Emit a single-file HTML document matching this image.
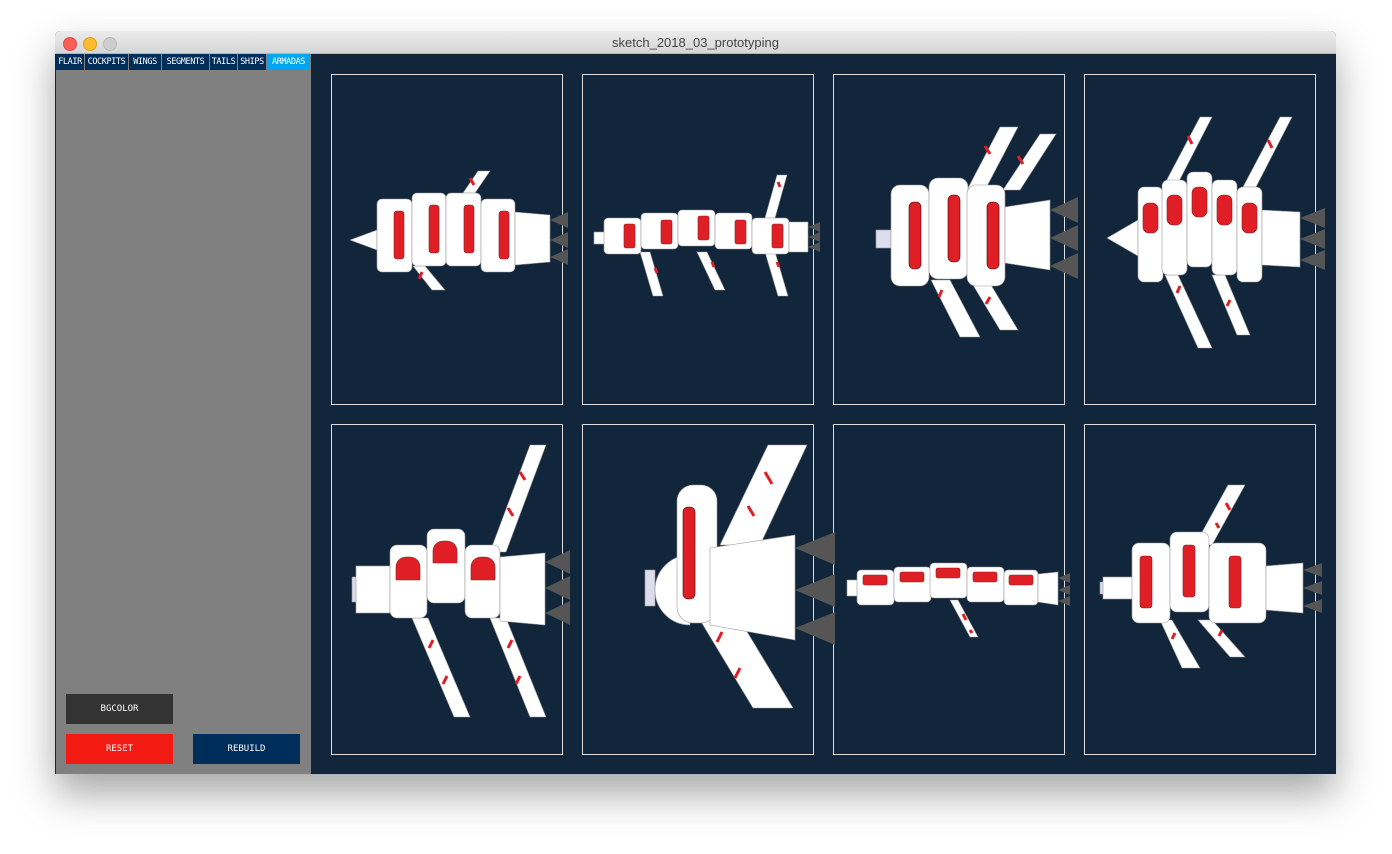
<!DOCTYPE html>
<html><head><meta charset="utf-8"><style>
html,body{margin:0;padding:0;width:1392px;height:854px;background:#fff;overflow:hidden;font-family:"Liberation Sans",sans-serif}
.win{position:absolute;left:55px;top:31px;width:1281px;height:743px;box-shadow:0 20px 40px rgba(0,0,0,.35);border-radius:5px 5px 0 0;overflow:hidden;background:#11253b}
.title{position:absolute;left:0;top:0;width:1281px;height:22px;background:linear-gradient(#ebebeb,#d6d6d6);border-bottom:1px solid #b5b5b5;text-align:center;font-size:13px;line-height:23px;color:#444}
.dot{position:absolute;top:6px;width:12px;height:12px;border-radius:50%}
.left{position:absolute;left:1px;top:23px;width:255px;height:720px;background:#808080}
.tab{position:absolute;top:23px;height:16px;background:#002e5a;color:#fff;font-size:8.5px;line-height:17px;text-align:center;font-family:"DejaVu Sans Mono",monospace;letter-spacing:-.4px}
.btn{position:absolute;width:107px;height:30px;color:#fff;font-size:9px;line-height:30px;text-align:center;font-family:"DejaVu Sans Mono",monospace}
svg{position:absolute;left:0;top:0}
</style></head><body>
<div class="win">
<div class="title">sketch_2018_03_prototyping
<div class="dot" style="left:8px;background:#fc5f57;border:0.5px solid #de4a43"></div>
<div class="dot" style="left:28px;background:#fdbc2e;border:0.5px solid #de9f22"></div>
<div class="dot" style="left:48px;background:#cdcdcd;border:0.5px solid #b9b9b9"></div>
</div>
<div class="left"></div>
<div class="tab" style="left:1px;width:28px">FLAIR</div>
<div class="tab" style="left:30px;width:43px">COCKPITS</div>
<div class="tab" style="left:74px;width:32px">WINGS</div>
<div class="tab" style="left:107px;width:47px">SEGMENTS</div>
<div class="tab" style="left:155px;width:27px">TAILS</div>
<div class="tab" style="left:183px;width:28px">SHIPS</div>
<div class="tab" style="left:212px;width:43px;background:#00a6f2">ARMADAS</div>
<div class="btn" style="left:11px;top:663px;background:#333">BGCOLOR</div>
<div class="btn" style="left:11px;top:703px;background:#f21a12">RESET</div>
<div class="btn" style="left:138px;top:703px;background:#002e5a">REBUILD</div>
</div>
<svg width="1392" height="854" viewBox="0 0 1392 854">
<defs><clipPath id="cp"><rect x="311" y="54" width="1025" height="720"/></clipPath></defs>
<g fill="none" stroke="#ddd" stroke-width="1">
<rect x="331.5" y="74.5" width="231" height="330"/><rect x="582.5" y="74.5" width="231" height="330"/><rect x="833.5" y="74.5" width="231" height="330"/><rect x="1084.5" y="74.5" width="231" height="330"/>
<rect x="331.5" y="424.5" width="231" height="330"/><rect x="582.5" y="424.5" width="231" height="330"/><rect x="833.5" y="424.5" width="231" height="330"/><rect x="1084.5" y="424.5" width="231" height="330"/>
</g>
<g clip-path="url(#cp)" stroke="#999" stroke-width=".6">
<!-- ship1 -->
<g fill="#fff"><polygon points="463,193 478,171 490,171 475,193"/><polygon points="413,266 425,266 445,290 432,290"/>
<polygon points="350,240 377,230 377,250"/>
<rect x="377" y="199" width="35" height="73" rx="5"/><rect x="412" y="193" width="34" height="73" rx="5"/><rect x="446" y="193" width="35" height="73" rx="5"/><rect x="481" y="199" width="34" height="73" rx="5"/>
<polygon points="515,212 550,215 550,262 515,265"/></g>
<g fill="#555" stroke="none"><polygon points="550,220 568,212 568,228"/><polygon points="550,240 568,232 568,248"/><polygon points="550,257 568,249 568,265"/></g>
<g fill="#e01e26" stroke="#822"><rect x="394" y="211" width="10" height="48" rx="3"/><rect x="429" y="205" width="10" height="48" rx="3"/><rect x="464" y="205" width="10" height="48" rx="3"/><rect x="499" y="211" width="10" height="48" rx="3"/></g>
<!-- ship2 -->
<g fill="#fff"><polygon points="765,218 777,175 787,175 775,218"/><polygon points="640,252 650,252 663,296 653,296"/><polygon points="697,252 707,252 725,290 715,290"/><polygon points="765,252 775,252 788,296 778,296"/>
<rect x="594" y="232" width="12" height="12"/>
<rect x="604" y="218" width="37" height="36" rx="4"/><rect x="641" y="213" width="37" height="36" rx="4"/><rect x="678" y="210" width="37" height="36" rx="4"/><rect x="715" y="213" width="37" height="36" rx="4"/><rect x="752" y="218" width="37" height="36" rx="4"/>
<polygon points="789,222 808,222 808,252 789,252"/></g>
<g fill="#555" stroke="none"><polygon points="808,227 820,222 820,232"/><polygon points="808,237 820,232 820,242"/><polygon points="808,247 820,242 820,252"/></g>
<g fill="#e01e26" stroke="#822"><rect x="624" y="224" width="11" height="24" rx="2"/><rect x="661" y="220" width="11" height="24" rx="2"/><rect x="698" y="216" width="11" height="24" rx="2"/><rect x="735" y="220" width="11" height="24" rx="2"/><rect x="772" y="224" width="11" height="24" rx="2"/></g>
<!-- ship3 -->
<g fill="#fff"><polygon points="967,190 1000,127 1018,127 985,190"/><polygon points="1003,190 1040,134 1056,134 1020,190"/><polygon points="931,280 950,280 980,337 960,337"/><polygon points="970,280 988,280 1018,330 1000,330"/>
<rect x="876" y="230" width="15" height="18" fill="#dde"/>
<rect x="891" y="185" width="38" height="101" rx="9"/><rect x="929" y="178" width="39" height="101" rx="9"/><rect x="967" y="185" width="38" height="101" rx="9"/>
<polygon points="1005,207 1050,200 1050,270 1005,263"/></g>
<g fill="#555" stroke="none"><polygon points="1050,210 1078,197 1078,223"/><polygon points="1050,238 1078,225 1078,251"/><polygon points="1050,266 1078,253 1078,279"/></g>
<g fill="#e01e26" stroke="#400"><rect x="909" y="202" width="12" height="67" rx="5"/><rect x="948" y="195" width="12" height="67" rx="5"/><rect x="987" y="202" width="12" height="67" rx="5"/></g>
<!-- ship4 -->
<g fill="#fff"><polygon points="1163,187 1200,117 1212,117 1176,187"/><polygon points="1243,187 1280,117 1292,117 1256,187"/><polygon points="1165,275 1178,275 1212,348 1198,348"/><polygon points="1212,275 1225,275 1250,335 1237,335"/>
<polygon points="1107,238 1138,220 1138,256" fill="#fff"/>
<rect x="1138" y="187" width="25" height="95" rx="6"/><rect x="1162" y="180" width="25" height="95" rx="6"/><rect x="1187" y="172" width="25" height="95" rx="6"/><rect x="1212" y="180" width="25" height="95" rx="6"/><rect x="1237" y="187" width="25" height="95" rx="6"/>
<polygon points="1262,210 1300,212 1300,267 1262,265"/></g>
<g fill="#555" stroke="none"><polygon points="1300,218 1325,208 1325,228"/><polygon points="1300,239 1325,229 1325,249"/><polygon points="1300,260 1325,250 1325,270"/></g>
<g fill="#e01e26" stroke="#822"><rect x="1143" y="203" width="15" height="30" rx="6"/><rect x="1167" y="195" width="15" height="30" rx="6"/><rect x="1192" y="187" width="15" height="30" rx="6"/><rect x="1217" y="195" width="15" height="30" rx="6"/><rect x="1242" y="203" width="15" height="30" rx="6"/></g>
<!-- ship5 -->
<g fill="#fff"><polygon points="490,552 530,445 546,445 506,552"/><polygon points="412,618 428,618 470,717 454,717"/><polygon points="490,618 506,618 546,717 530,717"/>
<rect x="352" y="577" width="6" height="25" fill="#dde"/>
<rect x="356" y="566" width="34" height="47"/>
<rect x="390" y="545" width="37" height="73" rx="7"/><rect x="427" y="529" width="38" height="74" rx="7"/><rect x="465" y="545" width="35" height="73" rx="7"/>
<polygon points="500,557 545,553 545,625 500,621"/></g>
<g fill="#555" stroke="none"><polygon points="545,562 570,550 570,574"/><polygon points="545,588 570,576 570,600"/><polygon points="545,613 570,601 570,625"/></g>
<g fill="#e01e26" stroke="#822"><path d="M396 580v-13a10 10 0 0 1 10-10h4a10 10 0 0 1 10 10v13z"/><path d="M433 563v-12a10 10 0 0 1 10-10h4a10 10 0 0 1 10 10v12z"/><path d="M471 580v-13a10 10 0 0 1 10-10h4a10 10 0 0 1 10 10v13z"/></g>
<!-- ship6 -->
<g fill="#fff"><polygon points="720,545 768,445 807,445 760,545"/><polygon points="700,620 740,620 793,708 753,708"/>
<rect x="645" y="570" width="10" height="36" fill="#dde"/>
<path d="M690 555 v70 a35 35 0 0 1 0 -70z"/>
<rect x="677" y="485" width="40" height="138" rx="16"/>
<polygon points="710,548 795,535 795,640 710,625"/></g>
<g fill="#555" stroke="none"><polygon points="795,548 835,532 835,565"/><polygon points="795,590 835,574 835,607"/><polygon points="795,628 835,612 835,645"/></g>
<g fill="#e01e26" stroke="#400"><rect x="683" y="507" width="12" height="92" rx="5"/></g>
<!-- ship7 -->
<g fill="#fff"><polygon points="950,600 958,600 978,637 970,637"/>
<rect x="847" y="580" width="12" height="16"/>
<rect x="857" y="570" width="37" height="35" rx="4"/><rect x="894" y="567" width="37" height="35" rx="4"/><rect x="930" y="563" width="37" height="35" rx="4"/><rect x="967" y="567" width="37" height="35" rx="4"/><rect x="1004" y="570" width="34" height="35" rx="4"/>
<polygon points="1038,574 1058,572 1058,605 1038,602"/></g>
<g fill="#555" stroke="none"><polygon points="1058,578 1070,573 1070,583"/><polygon points="1058,590 1070,585 1070,595"/><polygon points="1058,601 1070,596 1070,606"/></g>
<g fill="#e01e26" stroke="#822"><rect x="863" y="575" width="24" height="10" rx="2"/><rect x="900" y="572" width="24" height="10" rx="2"/><rect x="936" y="568" width="24" height="10" rx="2"/><rect x="973" y="572" width="24" height="10" rx="2"/><rect x="1009" y="575" width="24" height="10" rx="2"/></g>
<!-- ship8 -->
<g fill="#fff"><polygon points="1195,545 1228,485 1245,485 1212,545"/><polygon points="1160,620 1172,620 1200,668 1182,668"/><polygon points="1198,620 1212,620 1245,657 1230,657"/>
<rect x="1100" y="582" width="6" height="12" fill="#dde"/>
<rect x="1103" y="577" width="30" height="22"/>
<rect x="1132" y="543" width="38" height="80" rx="7"/><rect x="1170" y="532" width="39" height="80" rx="7"/><rect x="1209" y="543" width="57" height="80" rx="7"/>
<polygon points="1266,566 1303,563 1303,613 1266,610"/></g>
<g fill="#555" stroke="none"><polygon points="1303,570 1322,563 1322,577"/><polygon points="1303,588 1322,581 1322,595"/><polygon points="1303,606 1322,599 1322,613"/></g>
<g fill="#e01e26" stroke="#822"><rect x="1140" y="556" width="12" height="52" rx="3"/><rect x="1183" y="545" width="12" height="52" rx="3"/><rect x="1229" y="556" width="12" height="52" rx="3"/></g>
</g>
<!-- wing stripes -->
<g stroke="#e01e26" stroke-width="3" clip-path="url(#cp)">
<path d="M470 178l4 7M422 272l-3 7M655 268l2 5M712 262l2 5M777 262l2 5M778 182l2 5M985 146l5 8M1018 156l5 8M942 290l-3 7M990 297l-4 7M1188 136l4 8M1268 140l4 8M1180 286l-3 7M1230 300l-3 6M520 472l5 8M508 508l5 8M433 640l-4 8M447 676l-4 8M512 640l-4 8M520 676l-4 8M765 472l7 12M748 506l6 10M722 632l-5 10M740 668l-5 10M963 614l3 6M970 630l2 3M1226 503l4 7M1216 523l3 5M1175 633l-3 6M1222 630l-3 6"/>
</g>
</svg>
</body></html>
